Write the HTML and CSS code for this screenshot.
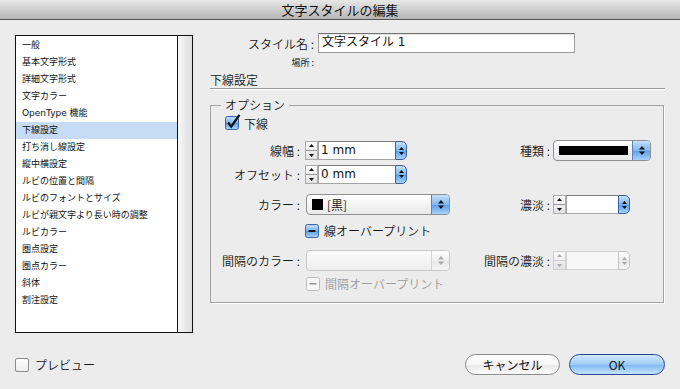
FILE: index.html
```html
<!DOCTYPE html>
<html lang="ja">
<head>
<meta charset="UTF-8">
<title>文字スタイルの編集</title>
<link rel="stylesheet" href="styles.css">
</head>
<body>
<div class="titlebar">文字スタイルの編集</div>

<div class="content">
  <div class="listbox">
    <ul class="items">
      <li>一般</li>
      <li>基本文字形式</li>
      <li>詳細文字形式</li>
      <li>文字カラー</li>
      <li>OpenType 機能</li>
      <li class="selected">下線設定</li>
      <li>打ち消し線設定</li>
      <li>縦中横設定</li>
      <li>ルビの位置と間隔</li>
      <li>ルビのフォントとサイズ</li>
      <li>ルビが親文字より長い時の調整</li>
      <li>ルビカラー</li>
      <li>圏点設定</li>
      <li>圏点カラー</li>
      <li>斜体</li>
      <li>割注設定</li>
    </ul>
    <div class="scroll"></div>
  </div>

  <div class="panel">
    <div class="name-row">
      <span class="name-lbl">スタイル名 :</span>
      <div class="text-box">文字スタイル 1</div>
    </div>
    <div class="loc-row">場所 :</div>
    <div class="section">下線設定</div>

    <fieldset class="group">
      <legend>オプション</legend>

      <div class="frow r1">
        <svg class="cb" width="16" height="16" viewBox="0 0 16 16">
          <defs>
            <linearGradient id="blu" x1="0" y1="0" x2="0" y2="1">
              <stop offset="0" stop-color="#c3dffa"/>
              <stop offset=".5" stop-color="#7db5ee"/>
              <stop offset=".5" stop-color="#5a9de8"/>
              <stop offset="1" stop-color="#a9d6fb"/>
            </linearGradient>
          </defs>
          <rect x="0.5" y="2.5" width="13" height="13" rx="2" fill="url(#blu)" stroke="#3b63a6"/>
          <path d="M3 8.5 L6.2 12.6 L14.5 0.8" fill="none" stroke="#111" stroke-width="2.3"/>
        </svg>
        <span>下線</span>
      </div>

      <div class="frow r2">
        <span class="lbl">線幅 :</span>
        <div class="col2">
          <div class="spin">
            <div class="arrows">
              <svg width="11" height="8" viewBox="0 0 11 8"><path d="M5.5 2 L8 5 H3 Z" fill="#111"/></svg>
              <svg width="11" height="8" viewBox="0 0 11 8"><path d="M5.5 6 L8 3 H3 Z" fill="#111"/></svg>
            </div>
            <div class="field wide-field">1 mm</div>
            <div class="btn"><svg width="5" height="10" viewBox="0 0 5 10"><path d="M2.5 1 L5 4 H0 Z M2.5 9 L5 6 H0 Z" fill="#111"/></svg></div>
          </div>
        </div>
        <span class="lbl2">種類 :</span>
        <div class="popup kind">
          <div class="val"><span class="line-swatch"></span></div>
          <div class="cap"><svg width="6" height="11" viewBox="0 0 6 11"><path d="M3 1 L6 4.5 H0 Z M3 10 L6 6.5 H0 Z" fill="#111"/></svg></div>
        </div>
      </div>

      <div class="frow r3">
        <span class="lbl">オフセット :</span>
        <div class="col2">
          <div class="spin">
            <div class="arrows">
              <svg width="11" height="8" viewBox="0 0 11 8"><path d="M5.5 2 L8 5 H3 Z" fill="#111"/></svg>
              <svg width="11" height="8" viewBox="0 0 11 8"><path d="M5.5 6 L8 3 H3 Z" fill="#111"/></svg>
            </div>
            <div class="field wide-field">0 mm</div>
            <div class="btn"><svg width="5" height="10" viewBox="0 0 5 10"><path d="M2.5 1 L5 4 H0 Z M2.5 9 L5 6 H0 Z" fill="#111"/></svg></div>
          </div>
        </div>
      </div>

      <div class="frow r4">
        <span class="lbl">カラー :</span>
        <div class="col2">
          <div class="popup color">
            <div class="val"><span class="swatch"></span>[黒]</div>
            <div class="cap"><svg width="6" height="11" viewBox="0 0 6 11"><path d="M3 1 L6 4.5 H0 Z M3 10 L6 6.5 H0 Z" fill="#111"/></svg></div>
          </div>
        </div>
        <span class="lbl2">濃淡 :</span>
        <div class="spin">
          <div class="arrows">
            <svg width="11" height="8" viewBox="0 0 11 8"><path d="M5.5 2 L8 5 H3 Z" fill="#111"/></svg>
            <svg width="11" height="8" viewBox="0 0 11 8"><path d="M5.5 6 L8 3 H3 Z" fill="#111"/></svg>
          </div>
          <div class="field small-field"></div>
          <div class="btn"><svg width="5" height="10" viewBox="0 0 5 10"><path d="M2.5 1 L5 4 H0 Z M2.5 9 L5 6 H0 Z" fill="#111"/></svg></div>
        </div>
      </div>

      <div class="frow r5">
        <span class="lbl"></span>
        <svg class="cb" width="14" height="14" viewBox="0 0 14 14">
          <rect x="0.5" y="0.5" width="13" height="13" rx="2" fill="url(#blu)" stroke="#3b63a6"/>
          <rect x="3.5" y="6" width="7" height="2" fill="#111"/>
        </svg>
        <span class="cb-text">線オーバープリント</span>
      </div>

      <div class="frow r6">
        <span class="lbl">間隔のカラー :</span>
        <div class="col2">
          <div class="popup color disabled">
            <div class="val"></div>
            <div class="cap"><svg width="6" height="11" viewBox="0 0 6 11"><path d="M3 1 L6 4.5 H0 Z M3 10 L6 6.5 H0 Z" fill="#aaa"/></svg></div>
          </div>
        </div>
        <span class="lbl2">間隔の濃淡 :</span>
        <div class="spin disabled">
          <div class="arrows">
            <svg width="11" height="8" viewBox="0 0 11 8"><path d="M5.5 2 L8 5 H3 Z" fill="#aaa"/></svg>
            <svg width="11" height="8" viewBox="0 0 11 8"><path d="M5.5 6 L8 3 H3 Z" fill="#aaa"/></svg>
          </div>
          <div class="field small-field"></div>
          <div class="btn"><svg width="5" height="10" viewBox="0 0 5 10"><path d="M2.5 1 L5 4 H0 Z M2.5 9 L5 6 H0 Z" fill="#aaa"/></svg></div>
        </div>
      </div>

      <div class="frow r7">
        <span class="lbl"></span>
        <svg class="cb dim" width="14" height="14" viewBox="0 0 14 14">
          <rect x="0.5" y="0.5" width="13" height="13" rx="2" fill="#f6f6f6" stroke="#bdbdbd"/>
          <rect x="3.5" y="6" width="7" height="1.6" fill="#999"/>
        </svg>
        <span class="cb-text dim-text">間隔オーバープリント</span>
      </div>
    </fieldset>
  </div>
</div>

<div class="footer">
  <div class="preview">
    <span class="box"></span>
    <span>プレビュー</span>
  </div>
  <div class="buttons">
    <button class="cancel">キャンセル</button>
    <button class="ok">OK</button>
  </div>
</div>
</body>
</html>
```

FILE: styles.css
```css
body {
  margin: 0;
  width: 680px;
  height: 389px;
  overflow: hidden;
  background-color: #ececec;
  font-family: "Noto Sans CJK JP", "DejaVu Sans", sans-serif;
  font-size: 12px;
  font-weight: 350;
  color: #161616;
  display: flex;
  flex-direction: column;
}

.titlebar {
  height: 19px;
  line-height: 19px;
  border-bottom: 1px solid #555;
  background: linear-gradient(#e8e8e8, #b5b5b5);
  text-align: center;
  font-size: 13px;
  font-weight: 400;
  color: #111;
}

.content {
  display: flex;
  padding: 15px 0 0 15px;
  height: 298px;
}

/* category list */
.listbox {
  width: 178px;
  height: 298px;
  box-sizing: border-box;
  border: 1px solid #111;
  background: #fff;
  display: flex;
}
.items {
  flex: 1;
  list-style: none;
  margin: 0;
  padding: 1px 0 0;
  font-family: "DejaVu Sans", "Noto Sans CJK JP", sans-serif;
  font-size: 9px;
  font-weight: 400;
  color: #111;
}
.items li {
  height: 17px;
  line-height: 17px;
  padding-left: 6px;
}
.items li.selected {
  background: #c5dbf6;
}
.scroll {
  width: 14px;
  border-left: 1px solid #111;
  background: linear-gradient(to right, #f8f8f8, #dedede);
}

/* right side */
.panel {
  margin-left: 17px;
  margin-top: -2px;
  width: 455px;
}
.name-row {
  display: flex;
  align-items: center;
  height: 20px;
}
.name-lbl {
  width: 104px;
  margin-right: 4px;
  text-align: right;
}
.text-box {
  width: 257px;
  height: 20px;
  box-sizing: border-box;
  border: 1px solid #9c9c9c;
  border-top-color: #727272;
  background: #fff;
  box-shadow: inset 0 1px 1px rgba(0, 0, 0, 0.12);
  padding-left: 3px;
  line-height: 17px;
  font-family: "DejaVu Sans", "Noto Sans CJK JP", sans-serif;
  font-weight: 400;
  color: #111;
}
.loc-row {
  width: 104px;
  margin-top: 3px;
  height: 13px;
  line-height: 13px;
  text-align: right;
  font-size: 9px;
  font-weight: 400;
}
.section {
  margin-top: 4px;
  line-height: 14px;
  padding-bottom: 1px;
  border-bottom: 1px solid #9a9a9a;
  box-shadow: 0 1px 0 #fff;
}

.group {
  margin: 9px 0 0;
  padding: 0 0 12px;
  width: 454px;
  box-sizing: border-box;
  min-width: 0;
  border: 1px solid #a2a2a2;
  box-shadow: 1px 1px 0 #fff;
}
.group legend {
  margin-left: 10px;
  padding: 0 4px;
  line-height: 14px;
}

.frow {
  display: flex;
  align-items: center;
}
.r1 { height: 14px; margin-top: 4px; padding-left: 14px; }
.r2 { height: 21px; margin-top: 10px; }
.r3 { height: 20px; margin-top: 3px; }
.r4 { height: 21px; margin-top: 10px; }
.r5 { height: 13px; margin-top: 9px; }
.r6 { height: 21px; margin-top: 13px; }
.r7 { height: 13px; margin-top: 6px; }

.r1 .cb { margin-top: -3px; margin-right: 3px; }

.lbl {
  width: 94px;
  box-sizing: border-box;
  padding-right: 5px;
  text-align: right;
  flex: none;
}
.col2 {
  width: 148px;
  flex: none;
}
.lbl2 {
  width: 100px;
  box-sizing: border-box;
  padding-right: 3px;
  text-align: right;
  flex: none;
}
.cb-text {
  margin-left: 5px;
}
.r7 .cb { margin-left: 1px; }
.dim-text {
  color: #9a9a9a;
}

/* stepper fields */
.spin {
  display: flex;
  height: 19px;
}
.spin .arrows {
  width: 13px;
  box-sizing: border-box;
  border: 1px solid #acacac;
  background: linear-gradient(#fbfbfb, #e2e2e2);
  display: flex;
  flex-direction: column;
}
.spin .arrows svg {
  flex: 1;
  display: block;
}
.spin .arrows svg:first-child {
  border-bottom: 1px solid #9a9a9a;
}
.spin .field {
  box-sizing: border-box;
  border: 1px solid #a5a5a5;
  border-top-color: #7c7c7c;
  border-right: none;
  background: #fff;
  padding-left: 2px;
  line-height: 17px;
  font-family: "DejaVu Sans", sans-serif;
  font-size: 12px;
  font-weight: 400;
  color: #111;
}
.wide-field { width: 77px; }
.small-field { width: 52px; }
.spin .btn {
  width: 12px;
  box-sizing: border-box;
  border: 1px solid #3b61a5;
  border-radius: 0 5px 5px 0;
  background: linear-gradient(#c4e0fb, #7fb6ee 50%, #5b9de8 51%, #a6d3fb);
  display: flex;
  align-items: center;
  justify-content: center;
}
.spin.disabled .arrows {
  border-color: #d0d0d0;
}
.spin.disabled .arrows svg:first-child {
  border-bottom-color: #cfcfcf;
}
.spin.disabled .field {
  border-color: #d2d2d2;
  background: #f7f7f7;
}
.spin.disabled .btn {
  border-color: #c4c4c4;
  background: linear-gradient(#fdfdfd, #eeeeee 50%, #e6e6e6 51%, #f6f6f6);
}

/* popup menus */
.popup {
  display: flex;
  height: 21px;
  box-sizing: border-box;
  border: 1px solid #8f8f8f;
  border-radius: 4px;
  background: linear-gradient(#ffffff, #f3f3f3 55%, #e9e9e9);
  overflow: hidden;
}
.popup .val {
  flex: 1;
  display: flex;
  align-items: center;
  padding-left: 5px;
  font-size: 12px;
  color: #111;
}
.popup .cap {
  width: 17px;
  border-left: 1px solid #5d80bd;
  background: linear-gradient(#c4e0fb, #7fb6ee 50%, #5b9de8 51%, #a6d3fb);
  display: flex;
  align-items: center;
  justify-content: center;
}
.kind { width: 98px; }
.color { width: 144px; margin-left: 1px; }
.line-swatch {
  width: 69px;
  height: 9px;
  background: #000;
}
.swatch {
  width: 11px;
  height: 11px;
  background: #000;
  margin-right: 4px;
}
.popup.disabled {
  border-color: #c8c8c8;
  background: linear-gradient(#fafafa, #efefef);
}
.popup.disabled .cap {
  border-left-color: #d4d4d4;
  background: linear-gradient(#fdfdfd, #eeeeee 50%, #e6e6e6 51%, #f6f6f6);
}

/* bottom bar */
.footer {
  display: flex;
  align-items: center;
  justify-content: space-between;
  padding: 21px 15px 0 15px;
  height: 21px;
}
.preview {
  display: flex;
  align-items: center;
}
.preview .box {
  width: 14px;
  height: 14px;
  box-sizing: border-box;
  border: 1px solid #8c8c8c;
  border-radius: 2px;
  background: linear-gradient(#fff, #ececec);
  margin-right: 6px;
}
.buttons {
  display: flex;
  gap: 9px;
}
.buttons button {
  height: 21px;
  border-radius: 11px;
  font-family: "Noto Sans CJK JP", "DejaVu Sans", sans-serif;
  font-size: 12px;
  font-weight: 400;
  color: #111;
  padding: 0;
  line-height: 19px;
}
.cancel {
  width: 95px;
  border: 1px solid #8a8a8a;
  background: linear-gradient(#ffffff, #f5f5f5 50%, #e8e8e8 51%, #fcfcfc);
}
.ok {
  width: 96px;
  border: 1px solid #2a4290;
  background: linear-gradient(#d3e9fc, #9dcbf5 50%, #7cb8f1 51%, #c7e5fc);
}
```
